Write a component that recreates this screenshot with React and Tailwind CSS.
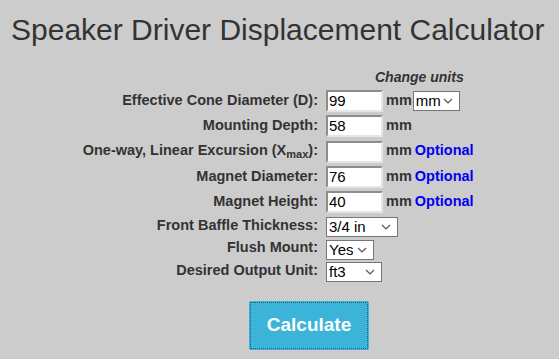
import { useState } from "react";

const font = { fontFamily: '"Liberation Sans", Arial, sans-serif' };

const Chevron = () => (
  <svg
    className="pointer-events-none absolute right-[7px] top-1/2 -translate-y-1/2"
    width="10"
    height="6"
    viewBox="0 0 10 6"
    fill="none"
  >
    <path d="M1 1l4 4 4-4" stroke="#555" strokeWidth="1.2" />
  </svg>
);

const Select = ({ value, options, width, onChange }) => (
  <div className="relative inline-block" style={{ width }}>
    <select
      value={value}
      onChange={(e) => onChange(e.target.value)}
      className="h-[20px] w-full appearance-none border border-[#767676] bg-white pl-[2px] text-[15px] leading-[18px] text-black outline-none"
    >
      {options.map((o) => (
        <option key={o}>{o}</option>
      ))}
    </select>
    <Chevron />
  </div>
);

const TextBox = ({ value, onChange }) => (
  <input
    type="text"
    value={value}
    onChange={(e) => onChange(e.target.value)}
    className="h-[22px] w-[57px] border-2 border-t-[#8d8d8d] border-l-[#8d8d8d] border-b-[#e6e6e6] border-r-[#e6e6e6] bg-white px-[1px] text-[15px] text-black outline-none"
  />
);

const Unit = ({ optional }) => (
  <span className="font-bold text-[14.5px] text-[#333]">
    mm
    {optional && <span className="ml-[3px] text-[#0000ee]">Optional</span>}
  </span>
);

const App = () => {
  const [cone, setCone] = useState("99");
  const [depth, setDepth] = useState("58");
  const [xmax, setXmax] = useState("");
  const [magDia, setMagDia] = useState("76");
  const [magHeight, setMagHeight] = useState("40");
  const [units, setUnits] = useState("mm");
  const [baffle, setBaffle] = useState("3/4 in");
  const [flush, setFlush] = useState("Yes");
  const [output, setOutput] = useState("ft3");

  const labelCls = "text-right font-bold text-[14.5px] text-[#333] pr-[8px] whitespace-nowrap";

  return (
    <div className="min-h-[359px] w-[559px] bg-[#cccccc]" style={font}>
      <h1 className="pl-[11px] pt-[13px] text-[30px] leading-[34px] text-[#333]">
        Speaker Driver Displacement Calculator
      </h1>

      <div className="mt-[20px] grid grid-cols-[244px_60px_auto] items-center pl-[82px]">
        <div />
        <div />
        <div className="h-[21px] text-[14px] font-bold italic leading-[21px] text-[#333]">
          <span className="-ml-[11px]">Change units</span>
        </div>

        <div className={labelCls}>Effective Cone Diameter (D):</div>
        <div className="h-[25px] pt-[1px]"><TextBox value={cone} onChange={setCone} /></div>
        <div className="flex items-center gap-[1px]">
          <Unit />
          <Select value={units} options={["mm", "in", "cm"]} width={47} onChange={setUnits} />
        </div>

        <div className={labelCls}>Mounting Depth:</div>
        <div className="h-[25px] pt-[1px]"><TextBox value={depth} onChange={setDepth} /></div>
        <Unit />

        <div className={labelCls}>
          One-way, Linear Excursion (X<sub className="text-[11px]">max</sub>):
        </div>
        <div className="h-[26px] pt-[2px]"><TextBox value={xmax} onChange={setXmax} /></div>
        <Unit optional />

        <div className={labelCls}>Magnet Diameter:</div>
        <div className="h-[25px] pt-[1px]"><TextBox value={magDia} onChange={setMagDia} /></div>
        <Unit optional />

        <div className={labelCls}>Magnet Height:</div>
        <div className="h-[25px] pt-[1px]"><TextBox value={magHeight} onChange={setMagHeight} /></div>
        <Unit optional />

        <div className={labelCls}>Front Baffle Thickness:</div>
        <div className="col-span-2 h-[23px] pt-[1px]">
          <Select value={baffle} options={["3/4 in", "1/2 in", "1 in"]} width={72} onChange={setBaffle} />
        </div>

        <div className={labelCls}>Flush Mount:</div>
        <div className="col-span-2 h-[22px] pt-[1px]">
          <Select value={flush} options={["Yes", "No"]} width={48} onChange={setFlush} />
        </div>

        <div className={labelCls}>Desired Output Unit:</div>
        <div className="col-span-2 h-[23px] pt-[1px]">
          <Select value={output} options={["ft3", "in3", "L", "cm3"]} width={56} onChange={setOutput} />
        </div>
      </div>

      <div className="mt-[19px] pl-[249px]">
        <button className="h-[49px] w-[120px] rounded-[2px] bg-[#3cb4d9] text-[19px] font-bold text-white outline-1 outline-dotted outline-offset-[-2px] outline-[#1d5f73]">
          Calculate
        </button>
      </div>
    </div>
  );
};

export default App;
